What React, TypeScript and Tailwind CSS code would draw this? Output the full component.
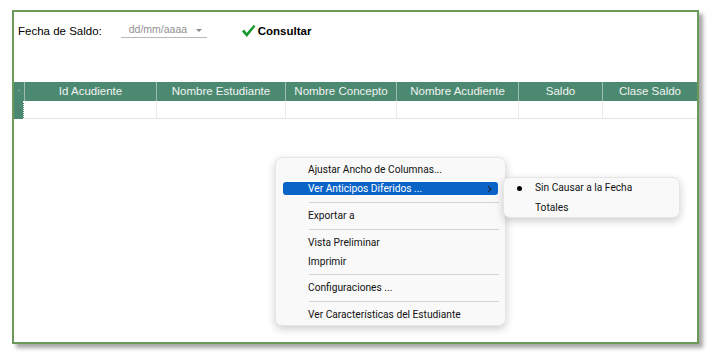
import React from "react";

const cols = [
  { label: "Id Acudiente", w: 133 },
  { label: "Nombre Estudiante", w: 129 },
  { label: "Nombre Concepto", w: 111 },
  { label: "Nombre Acudiente", w: 122 },
  { label: "Saldo", w: 84 },
  { label: "Clase Saldo", w: 94 },
];

function Sep({ mt }: { mt: string }) {
  return <div className={`ml-[33px] mr-[6px] h-px bg-[#d4d4d4] ${mt}`} />;
}

function Item({ children, mt = "" }: { children: React.ReactNode; mt?: string }) {
  return (
    <div className={`h-[19px] pl-[32px] flex items-center text-[10.2px] text-[#111111] ${mt}`}>{children}</div>
  );
}

export default function App() {
  return (
    <div className="relative w-[716px] h-[355px] bg-white overflow-hidden" style={{ fontFamily: "'Liberation Sans', Arial, sans-serif" }}>
      <div className="pl-[12px] pt-[10px]">
        <div className="w-[687px] h-[334px] border-2 border-[#6c9a5a] bg-white shadow-[4px_4px_4px_rgba(0,0,0,0.35)] flex flex-col">
          <div className="h-[70px] flex items-start pt-[12px]">
            <div className="pl-[4px] text-[11.5px] text-black leading-[14px]">Fecha de Saldo:</div>
            <div className="ml-[19px] w-[86px] h-[15px] border-b border-[#b8b8b8] flex items-start pl-[8px] -mt-[1px]">
              <span className="text-[10.5px] text-[#909090] leading-[13px]">dd/mm/aaaa</span>
              <svg width="6" height="4" viewBox="0 0 6 4" className="ml-[9px] mt-[6px]">
                <path d="M0 0 L6 0 L3 3 Z" fill="#8a8a8a" />
              </svg>
            </div>
            <div className="ml-[34px] flex items-center">
              <svg width="15" height="14" viewBox="0 0 16 14">
                <path d="M1 7.5 L3.5 5.5 L6 9 L13.5 0.5 L15.5 2 L6.2 13.5 Z" fill="#14962a" />
              </svg>
              <span className="ml-[2px] text-[11.5px] font-bold text-black leading-[14px]">Consultar</span>
            </div>
          </div>
          <div className="flex">
            <div className="w-[10px] flex flex-col">
              <div className="h-[19px] bg-[#4b8a70] flex items-center justify-center text-[8px] text-[#7fa894]">*</div>
              <div className="h-[18px] bg-[#4b8a70] flex items-center justify-center text-[9px] text-[#5a5a8a] border-r border-dotted border-white">›</div>
            </div>
            <div className="flex-1 flex flex-col">
              <div className="flex h-[19px] bg-[#4b8a70]">
                {cols.map((c, i) => (
                  <div
                    key={i}
                    style={{ width: c.w }}
                    className={`flex items-center justify-center text-[11.5px] text-[#f2f2f2] ${i < cols.length - 1 ? "border-r border-[#9bbcae]" : ""} ${i === 0 ? "border-l border-[#9bbcae]" : ""}`}
                  >
                    {c.label}
                  </div>
                ))}
              </div>
              <div className="flex h-[18px] border-b border-[#e3e3e3]">
                {cols.map((c, i) => (
                  <div key={i} style={{ width: c.w }} className={`${i < cols.length - 1 ? "border-r border-[#ececec]" : ""}`} />
                ))}
              </div>
            </div>
          </div>
        </div>
      </div>

      <div
        className="absolute left-[275px] top-[157px] w-[231px] h-[169px] rounded-[7px] bg-[#f9f9f9] border border-[#e6e6e6] shadow-[0_3px_8px_rgba(0,0,0,0.2)] pt-[2px]"
        style={{ fontFamily: "Roboto, sans-serif" }}
      >
        <Item>Ajustar Ancho de Columnas...</Item>
        <div className="mx-[7px] mt-[3px] h-[13px] rounded-[3px] bg-[#0a64c8] flex items-center pl-[25px] pr-[6px] text-[10.2px] text-white">
          <span className="flex-1">Ver Anticipos Diferidos ...</span>
          <svg width="5" height="8" viewBox="0 0 5 8"><path d="M1 1 L4 4 L1 7" stroke="#1c2a40" strokeWidth="1.2" fill="none" /></svg>
        </div>
        <Sep mt="mt-[7px]" />
        <Item mt="mt-[3px]">Exportar a</Item>
        <Sep mt="mt-[4px]" />
        <Item mt="mt-[3px]">Vista Preliminar</Item>
        <Item>Imprimir</Item>
        <Sep mt="mt-[3px]" />
        <Item mt="mt-[3px]">Configuraciones ...</Item>
        <Sep mt="mt-[4px]" />
        <Item mt="mt-[3px]">Ver Características del Estudiante</Item>
      </div>

      <div
        className="absolute left-[503px] top-[177px] w-[177px] h-[41px] rounded-[7px] bg-[#f9f9f9] border border-[#e6e6e6] shadow-[0_3px_8px_rgba(0,0,0,0.2)]"
        style={{ fontFamily: "Roboto, sans-serif" }}
      >
        <div className="h-[20px] flex items-center text-[10.2px] text-[#111111]">
          <span className="w-[31px] flex justify-center"><span className="w-[5px] h-[5px] rounded-full bg-black" /></span>
          Sin Causar a la Fecha
        </div>
        <div className="h-[20px] flex items-center pl-[31px] text-[10.2px] text-[#111111]">Totales</div>
      </div>
    </div>
  );
}
